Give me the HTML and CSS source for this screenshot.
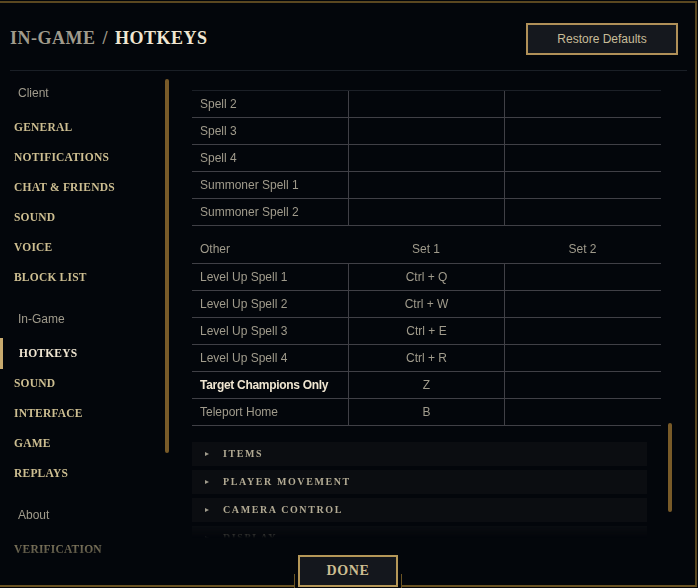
FILE: index.html
```html
<!DOCTYPE html>
<html>
<head>
<meta charset="utf-8">
<link rel="stylesheet" href="styles.css">
</head>
<body>
<div class="window">
  <header class="header">
    <h1 class="title"><span class="crumb">IN-GAME /</span> <span class="current">HOTKEYS</span></h1>
    <button class="restore">Restore Defaults</button>
  </header>
  <div class="main">
    <aside class="sidebar">
      <nav class="nav">
        <div class="group">
          <div class="group-label">Client</div>
          <div class="nav-item">GENERAL</div>
          <div class="nav-item">NOTIFICATIONS</div>
          <div class="nav-item">CHAT &amp; FRIENDS</div>
          <div class="nav-item">SOUND</div>
          <div class="nav-item">VOICE</div>
          <div class="nav-item">BLOCK LIST</div>
        </div>
        <div class="group">
          <div class="group-label">In-Game</div>
          <div class="nav-item active">HOTKEYS</div>
          <div class="nav-item">SOUND</div>
          <div class="nav-item">INTERFACE</div>
          <div class="nav-item">GAME</div>
          <div class="nav-item">REPLAYS</div>
        </div>
        <div class="group">
          <div class="group-label">About</div>
          <div class="nav-item">VERIFICATION</div>
        </div>
      </nav>
      <div class="track side-track"><div class="thumb side-thumb"></div></div>
    </aside>
    <section class="content">
      <div class="scroll">
        <div class="table table-first">
          <div class="row"><div class="cell name">Spell 2</div><div class="cell key"></div><div class="cell key"></div></div>
          <div class="row"><div class="cell name">Spell 3</div><div class="cell key"></div><div class="cell key"></div></div>
          <div class="row"><div class="cell name">Spell 4</div><div class="cell key"></div><div class="cell key"></div></div>
          <div class="row"><div class="cell name">Summoner Spell 1</div><div class="cell key"></div><div class="cell key"></div></div>
          <div class="row"><div class="cell name">Summoner Spell 2</div><div class="cell key"></div><div class="cell key"></div></div>
        </div>
        <div class="table">
          <div class="row head"><div class="cell name">Other</div><div class="cell key">Set 1</div><div class="cell key">Set 2</div></div>
          <div class="row"><div class="cell name">Level Up Spell 1</div><div class="cell key">Ctrl + Q</div><div class="cell key"></div></div>
          <div class="row"><div class="cell name">Level Up Spell 2</div><div class="cell key">Ctrl + W</div><div class="cell key"></div></div>
          <div class="row"><div class="cell name">Level Up Spell 3</div><div class="cell key">Ctrl + E</div><div class="cell key"></div></div>
          <div class="row"><div class="cell name">Level Up Spell 4</div><div class="cell key">Ctrl + R</div><div class="cell key"></div></div>
          <div class="row"><div class="cell name strong">Target Champions Only</div><div class="cell key">Z</div><div class="cell key"></div></div>
          <div class="row"><div class="cell name">Teleport Home</div><div class="cell key">B</div><div class="cell key"></div></div>
        </div>
        <div class="sections">
          <div class="section"><span class="arrow"></span>ITEMS</div>
          <div class="section"><span class="arrow"></span>PLAYER MOVEMENT</div>
          <div class="section"><span class="arrow"></span>CAMERA CONTROL</div>
          <div class="section"><span class="arrow"></span>DISPLAY</div>
        </div>
      </div>
      <div class="track content-track"><div class="thumb content-thumb"></div></div>
    </section>
  </div>
  <div class="done-notch"></div>
  <button class="done">DONE</button>
</div>
</body>
</html>
```
FILE: styles.css
```css
html, body {
  margin: 0;
  padding: 0;
  background: #03060b;
}
body {
  width: 698px;
  height: 588px;
  overflow: hidden;
  font-family: "Liberation Sans", Arial, sans-serif;
}
.window {
  position: relative;
  box-sizing: border-box;
  margin-top: 1px;
  width: 697px;
  height: 586px;
  border-top: 2px solid #5a4720;
  border-right: 2px solid #5a4720;
  border-bottom: 2px solid #6b5424;
  background: #03060b;
}
.header {
  box-sizing: border-box;
  height: 68px;
  margin: 0 8px 0 10px;
  border-bottom: 1px solid #1a1f26;
  display: flex;
  justify-content: space-between;
  align-items: flex-start;
  padding-top: 20px;
}
.title {
  margin: 4px 0 0 0;
  font-family: "Liberation Serif", "Times New Roman", serif;
  font-weight: bold;
  font-size: 18px;
  line-height: 22px;
  letter-spacing: 0.5px;
  word-spacing: 2px;
}
.crumb { color: #a09b8c; }
.current { color: #f0e6d2; }
.restore {
  box-sizing: border-box;
  width: 152px;
  height: 32px;
  margin-right: 9px;
  background: #15181e;
  border: 2px solid #b09058;
  color: #c8bd99;
  font-family: "Liberation Sans", Arial, sans-serif;
  font-size: 12px;
  padding: 0;
}
.main {
  display: flex;
}
.sidebar {
  display: flex;
  width: 172px;
  height: 504px;
  -webkit-mask-image: linear-gradient(to bottom, #000 calc(100% - 50px), transparent);
  mask-image: linear-gradient(to bottom, #000 calc(100% - 50px), transparent);
}
.nav {
  width: 165px;
  padding-top: 7px;
}
.group + .group { margin-top: 12px; }
.group-label {
  height: 30px;
  line-height: 30px;
  padding-left: 18px;
  margin-bottom: 4px;
  color: #a09b8c;
  font-size: 12px;
}
.nav-item {
  position: relative;
  height: 30px;
  line-height: 30px;
  padding-left: 14px;
  font-family: "Liberation Serif", "Times New Roman", serif;
  font-weight: bold;
  font-size: 11.5px;
  letter-spacing: 0.2px;
  color: #cdbe91;
}
.nav-item.active {
  padding-left: 19px;
  color: #f0e6d2;
}
.nav-item.active::before {
  content: "";
  position: absolute;
  left: 0;
  top: 0;
  width: 3px;
  height: 31px;
  background: #c8aa6e;
}
.track {
  width: 4px;
}
.thumb {
  width: 4px;
  border-radius: 2px;
  background: #785a28;
}
.side-thumb {
  margin-top: 8px;
  height: 374px;
}
.content {
  display: flex;
  padding-left: 20px;
}
.scroll {
  width: 469px;
  height: 467px;
  overflow: hidden;
  -webkit-mask-image: linear-gradient(to bottom, #000 calc(100% - 14px), transparent);
  mask-image: linear-gradient(to bottom, #000 calc(100% - 14px), transparent);
}
.table-first {
  margin-top: 19px;
  border-top: 1px solid #1c2027;
}
.row {
  display: grid;
  grid-template-columns: 156px 156px 157px;
  height: 27px;
  box-sizing: border-box;
  border-bottom: 1px solid #404046;
}
.cell {
  line-height: 26px;
  font-size: 12px;
  color: #a09b8c;
}
.cell.name { padding-left: 8px; }
.cell.key {
  text-align: center;
  border-left: 1px solid #404046;
}
.cell.strong {
  color: #f0e6d2;
  font-weight: bold;
  letter-spacing: -0.3px;
}
.row.head {
  height: 38px;
}
.row.head .cell {
  padding-top: 16px;
  line-height: 14px;
  border-left: none;
}
.sections {
  margin-top: 16px;
  width: 455px;
  display: flex;
  flex-direction: column;
  gap: 4px;
}
.section {
  height: 24px;
  line-height: 24px;
  background: #0b0d11;
  display: flex;
  align-items: center;
  font-family: "Liberation Serif", "Times New Roman", serif;
  font-weight: bold;
  font-size: 10px;
  letter-spacing: 1.6px;
  color: #b3ab94;
}
.arrow {
  width: 0;
  height: 0;
  margin-left: 13px;
  margin-right: 14px;
  border-top: 2.5px solid transparent;
  border-bottom: 2.5px solid transparent;
  border-left: 4px solid #a09b8c;
}
.content-track {
  margin-left: 7px;
}
.content-thumb {
  margin-top: 352px;
  height: 89px;
}
.done-notch {
  position: absolute;
  left: 294px;
  top: 571px;
  width: 106px;
  height: 14px;
  background: #03060b;
  border-left: 1px solid #6b5424;
  border-right: 1px solid #6b5424;
}
.done {
  position: absolute;
  left: 298px;
  top: 552px;
  box-sizing: border-box;
  width: 100px;
  height: 32px;
  background: #14171d;
  border: 2px solid #b59758;
  color: #cdbe91;
  font-family: "Liberation Serif", "Times New Roman", serif;
  font-weight: bold;
  font-size: 14px;
  letter-spacing: 0.6px;
  padding: 0;
}
```
